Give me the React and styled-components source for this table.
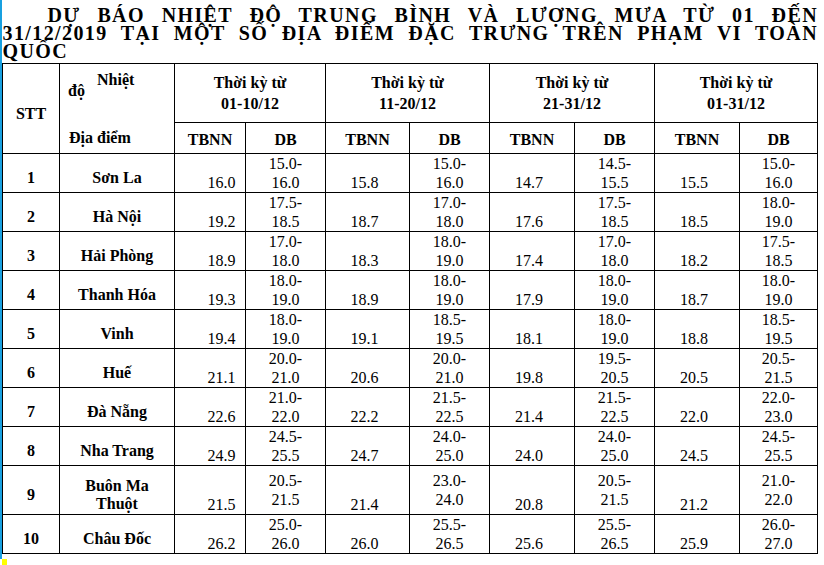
import React from 'react';
import styled, { createGlobalStyle } from 'styled-components';

const GlobalStyle = createGlobalStyle`
  html, body {
    margin: 0;
    padding: 0;
    background: #fff;
  }
  body {
    font-family: "Liberation Serif", "Times New Roman", serif;
    color: #000;
  }
`;

const Page = styled.div`
  display: flex;
  flex-direction: column;
  width: 824px;
  height: 565px;
  overflow: hidden;
`;

const Frame = styled.div`
  display: flex;
  height: 559px;
`;

const EdgeBar = styled.div`
  width: 2px;
  background: #18a0e0;
  flex-shrink: 0;
`;

const Corner = styled.div`
  width: 5px;
  height: 6px;
  margin-left: 2px;
  background: #ffff00;
`;

const Content = styled.div`
  width: 816px;
  display: flex;
  flex-direction: column;
`;

const Title = styled.h1`
  margin: 0 0 2.5px;
  padding: 5.5px 0 0 0.5px;
  font-size: 20px;
  line-height: 18.3px;
  font-weight: bold;
  letter-spacing: 1.4px;
`;

const TitleLine = styled.span`
  display: block;
  text-align: justify;
  text-align-last: ${(p) => (p.$last ? 'left' : 'justify')};
  text-indent: ${(p) => p.$indent || 0}px;
  white-space: nowrap;
`;

const Grid = styled.div`
  display: grid;
  grid-template-columns: 56px 114px 70px 79px 83px 79px 84px 79px 84px 77px;
  grid-template-rows: 58px 30px repeat(8, 38px) 48px 38px;
  gap: 1px;
  padding: 1px;
  background: #000;
  width: max-content;
  font-size: 16px;
`;

const Cell = styled.div`
  background: #fff;
  display: flex;
  flex-direction: column;
  overflow: visible;
`;

const HeadCell = styled(Cell)`
  font-weight: bold;
  text-align: center;
  justify-content: center;
  line-height: ${(p) => p.$lh || 18}px;
  padding-top: ${(p) => p.$shift || 0}px;
  grid-row: ${(p) => (p.$tall ? 'span 2' : 'auto')};
  grid-column: ${(p) => (p.$wide ? 'span 2' : 'auto')};
`;

const CornerHead = styled(Cell)`
  grid-row: span 2;
  font-weight: bold;
  line-height: 18px;
  justify-content: flex-start;
`;

const CornerPart = styled.span`
  display: block;
  padding-left: ${(p) => p.$left}px;
  margin-top: ${(p) => p.$top}px;
`;

const IndexCell = styled(Cell)`
  font-weight: bold;
  text-align: center;
  justify-content: center;
  line-height: 18px;
  padding-top: 10px;
`;

const PlaceCell = styled(IndexCell)``;

const AvgCell = styled(Cell)`
  justify-content: flex-end;
  text-align: center;
  line-height: 19px;
  padding-left: ${(p) => (p.$first ? 23 : 0)}px;
  padding-right: ${(p) => (p.$first ? 0 : 6)}px;
`;

const RangeCell = styled(Cell)`
  justify-content: center;
  text-align: center;
  line-height: 19px;
`;

const periods = ['01-10/12', '11-20/12', '21-31/12', '01-31/12'];

const rows = [
  ['Sơn La', ['16.0', '15.0', '16.0'], ['15.8', '15.0', '16.0'], ['14.7', '14.5', '15.5'], ['15.5', '15.0', '16.0']],
  ['Hà Nội', ['19.2', '17.5', '18.5'], ['18.7', '17.0', '18.0'], ['17.6', '17.5', '18.5'], ['18.5', '18.0', '19.0']],
  ['Hải Phòng', ['18.9', '17.0', '18.0'], ['18.3', '18.0', '19.0'], ['17.4', '17.0', '18.0'], ['18.2', '17.5', '18.5']],
  ['Thanh Hóa', ['19.3', '18.0', '19.0'], ['18.9', '18.0', '19.0'], ['17.9', '18.0', '19.0'], ['18.7', '18.0', '19.0']],
  ['Vinh', ['19.4', '18.0', '19.0'], ['19.1', '18.5', '19.5'], ['18.1', '18.0', '19.0'], ['18.8', '18.5', '19.5']],
  ['Huế', ['21.1', '20.0', '21.0'], ['20.6', '20.0', '21.0'], ['19.8', '19.5', '20.5'], ['20.5', '20.5', '21.5']],
  ['Đà Nẵng', ['22.6', '21.0', '22.0'], ['22.2', '21.5', '22.5'], ['21.4', '21.5', '22.5'], ['22.0', '22.0', '23.0']],
  ['Nha Trang', ['24.9', '24.5', '25.5'], ['24.7', '24.0', '25.0'], ['24.0', '24.0', '25.0'], ['24.5', '24.5', '25.5']],
  [['Buôn Ma', 'Thuột'], ['21.5', '20.5', '21.5'], ['21.4', '23.0', '24.0'], ['20.8', '20.5', '21.5'], ['21.2', '21.0', '22.0']],
  ['Châu Đốc', ['26.2', '25.0', '26.0'], ['26.0', '25.5', '26.5'], ['25.6', '25.5', '26.5'], ['25.9', '26.0', '27.0']],
];

const App = () => {
  return (
    <>
      <GlobalStyle />
      <Page>
        <Frame>
          <EdgeBar />
          <Content>
            <Title>
              <TitleLine $indent={45}>DỰ BÁO NHIỆT ĐỘ TRUNG BÌNH VÀ LƯỢNG MƯA TỪ 01 ĐẾN</TitleLine>
              <TitleLine>31/12/2019 TẠI MỘT SỐ ĐỊA ĐIỂM ĐẶC TRƯNG TRÊN PHẠM VI TOÀN</TitleLine>
              <TitleLine $last>QUỐC</TitleLine>
            </Title>
            <Grid>
              <HeadCell $tall $shift={11}>STT</HeadCell>
              <CornerHead>
                <CornerPart $left={37} $top={7}>Nhiệt</CornerPart>
                <CornerPart $left={8} $top={-7}>độ</CornerPart>
                <CornerPart $left={9} $top={29}>Địa điểm</CornerPart>
              </CornerHead>
              {periods.map((p) => (
                <HeadCell key={p} $wide $lh={21}>
                  <span>Thời kỳ từ</span>
                  <span>{p}</span>
                </HeadCell>
              ))}
              {periods.map((p) => (
                <React.Fragment key={'sub' + p}>
                  <HeadCell $shift={4}>TBNN</HeadCell>
                  <HeadCell $shift={4}>DB</HeadCell>
                </React.Fragment>
              ))}
              {rows.map(([place, ...values], i) => (
                <React.Fragment key={i}>
                  <IndexCell>{i + 1}</IndexCell>
                  <PlaceCell>
                    {Array.isArray(place)
                      ? place.map((part) => <span key={part}>{part}</span>)
                      : place}
                  </PlaceCell>
                  {values.map(([avg, low, high], j) => (
                    <React.Fragment key={j}>
                      <AvgCell $first={j === 0}>{avg}</AvgCell>
                      <RangeCell>
                        <span>{low}-</span>
                        <span>{high}</span>
                      </RangeCell>
                    </React.Fragment>
                  ))}
                </React.Fragment>
              ))}
            </Grid>
          </Content>
        </Frame>
        <Corner />
      </Page>
    </>
  );
};

export default App;
